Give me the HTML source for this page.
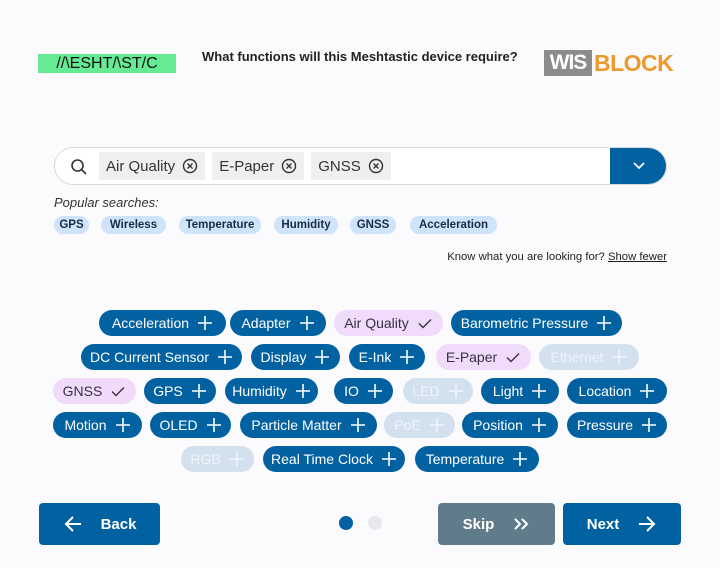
<!DOCTYPE html>
<html><head><meta charset="utf-8"><style>
*{box-sizing:border-box;margin:0;padding:0}
body{width:720px;height:568px;background:#fbfbfe;font-family:"Liberation Sans",sans-serif;position:relative;overflow:hidden}
.a{position:absolute}
.c{position:absolute;height:26px;border-radius:13px;display:flex;align-items:center;justify-content:center;gap:8px;font-size:14px;color:#fff;background:#0261a1;white-space:nowrap}
.c svg{width:16px;height:16px}
.s{background:#f0dcfa;color:#3a2f45}
.d{background:#d3e1ee;color:#eef4fa}
.p{position:absolute;top:216px;height:18px;border-radius:9px;background:#cfe3fb;color:#1a2c44;font-size:11.5px;font-weight:bold;display:flex;align-items:center;justify-content:center}
.tag{height:28px;background:#efefef;border-radius:2px;display:flex;align-items:center;padding:0 7px;gap:7px;font-size:15px;color:#333}
.btn{position:absolute;top:503px;height:42px;border-radius:4px;color:#fff;font-weight:bold;font-size:15px;display:flex;align-items:center;justify-content:center;gap:18px}
</style></head><body>
<div class="a" style="left:38px;top:54px;width:138px;height:19px;background:#67ea94;font-size:16px;color:#111;display:flex;align-items:center;justify-content:center">//\ESHT/\ST/C</div>
<div class="a" style="left:202px;top:49px;font-size:13px;font-weight:bold;color:#222">What functions will this Meshtastic device require?</div>
<div class="a" style="left:544px;top:50px;width:48px;height:26px;background:#8c8c8c;color:#fff;font-weight:bold;font-size:21px;line-height:26px;text-align:center;letter-spacing:-1px">WIS</div>
<div class="a" style="left:594px;top:50px;color:#ec9a2d;font-weight:bold;font-size:23px;line-height:26px;letter-spacing:-0.5px">BLOCK</div>

<div class="a" style="left:54px;top:147px;width:613px;height:38px;border:1px solid #d8d8d8;border-radius:19px;background:#fff;overflow:hidden">
 <svg class="a" style="left:15px;top:10px" width="18" height="18" viewBox="0 0 18 18"><circle cx="7.5" cy="7.5" r="5.5" fill="none" stroke="#333" stroke-width="1.6"/><path d="M11.5 11.5L16 16" stroke="#333" stroke-width="1.6"/></svg>
 <div class="a" style="left:44px;top:4px;display:flex;gap:7px">
  <div class="tag">Air Quality <svg width="16" height="16" viewBox="0 0 16 16"><circle cx="8" cy="8" r="6.5" fill="none" stroke="#333" stroke-width="1.4"/><path d="M5.5 5.5l5 5M10.5 5.5l-5 5" stroke="#333" stroke-width="1.4"/></svg></div>
  <div class="tag">E-Paper <svg width="16" height="16" viewBox="0 0 16 16"><circle cx="8" cy="8" r="6.5" fill="none" stroke="#333" stroke-width="1.4"/><path d="M5.5 5.5l5 5M10.5 5.5l-5 5" stroke="#333" stroke-width="1.4"/></svg></div>
  <div class="tag">GNSS <svg width="16" height="16" viewBox="0 0 16 16"><circle cx="8" cy="8" r="6.5" fill="none" stroke="#333" stroke-width="1.4"/><path d="M5.5 5.5l5 5M10.5 5.5l-5 5" stroke="#333" stroke-width="1.4"/></svg></div>
 </div>
 <div class="a" style="left:555px;top:-1px;width:58px;height:38px;background:#0261a1"><svg class="a" style="left:21px;top:12px" width="16" height="14" viewBox="0 0 16 14"><path d="M3 4l5 5 5-5" fill="none" stroke="#fff" stroke-width="1.8"/></svg></div>
</div>

<div class="a" style="left:54px;top:195px;font-size:13px;font-style:italic;color:#333">Popular searches:</div>
<div class="p" style="left:54px;width:35px">GPS</div>
<div class="p" style="left:101px;width:65px">Wireless</div>
<div class="p" style="left:179px;width:82px">Temperature</div>
<div class="p" style="left:274px;width:64px">Humidity</div>
<div class="p" style="left:350px;width:46px">GNSS</div>
<div class="p" style="left:410px;width:87px">Acceleration</div>

<div class="a" style="right:53px;top:251px;font-size:11.3px;color:#222">Know what you are looking for? <u>Show fewer</u></div>

<svg width="0" height="0" style="position:absolute"><defs>
<symbol id="pl" viewBox="0 0 16 16"><path d="M8 1v14M1 8h14" stroke="currentColor" stroke-width="1.6"/></symbol>
<symbol id="ck" viewBox="0 0 16 16"><path d="M2 8.5l4 4 8-8" fill="none" stroke="currentColor" stroke-width="1.4"/></symbol>
</defs></svg>

<div class="c" style="left:99px;top:310px;width:127px">Acceleration<svg><use href="#pl"/></svg></div>
<div class="c" style="left:230px;top:310px;width:96px">Adapter<svg><use href="#pl"/></svg></div>
<div class="c s" style="left:334px;top:310px;width:109px">Air Quality<svg><use href="#ck"/></svg></div>
<div class="c" style="left:451px;top:310px;width:171px">Barometric Pressure<svg><use href="#pl"/></svg></div>

<div class="c" style="left:81px;top:344px;width:161px">DC Current Sensor<svg><use href="#pl"/></svg></div>
<div class="c" style="left:251px;top:344px;width:89px">Display<svg><use href="#pl"/></svg></div>
<div class="c" style="left:349px;top:344px;width:76px">E-Ink<svg><use href="#pl"/></svg></div>
<div class="c s" style="left:436px;top:344px;width:95px">E-Paper<svg><use href="#ck"/></svg></div>
<div class="c d" style="left:539px;top:344px;width:100px">Ethernet<svg><use href="#pl"/></svg></div>

<div class="c s" style="left:53px;top:378px;width:83px">GNSS<svg><use href="#ck"/></svg></div>
<div class="c" style="left:144px;top:378px;width:72px">GPS<svg><use href="#pl"/></svg></div>
<div class="c" style="left:225px;top:378px;width:93px">Humidity<svg><use href="#pl"/></svg></div>
<div class="c" style="left:334px;top:378px;width:59px">IO<svg><use href="#pl"/></svg></div>
<div class="c d" style="left:403px;top:378px;width:70px">LED<svg><use href="#pl"/></svg></div>
<div class="c" style="left:481px;top:378px;width:78px">Light<svg><use href="#pl"/></svg></div>
<div class="c" style="left:567px;top:378px;width:100px">Location<svg><use href="#pl"/></svg></div>

<div class="c" style="left:53px;top:412px;width:89px">Motion<svg><use href="#pl"/></svg></div>
<div class="c" style="left:150px;top:412px;width:81px">OLED<svg><use href="#pl"/></svg></div>
<div class="c" style="left:240px;top:412px;width:137px">Particle Matter<svg><use href="#pl"/></svg></div>
<div class="c d" style="left:384px;top:412px;width:71px">PoE<svg><use href="#pl"/></svg></div>
<div class="c" style="left:462px;top:412px;width:96px">Position<svg><use href="#pl"/></svg></div>
<div class="c" style="left:567px;top:412px;width:100px">Pressure<svg><use href="#pl"/></svg></div>

<div class="c d" style="left:181px;top:446px;width:73px">RGB<svg><use href="#pl"/></svg></div>
<div class="c" style="left:263px;top:446px;width:142px">Real Time Clock<svg><use href="#pl"/></svg></div>
<div class="c" style="left:415px;top:446px;width:124px">Temperature<svg><use href="#pl"/></svg></div>

<div class="btn" style="left:39px;width:121px;background:#0261a1"><svg width="20" height="18" viewBox="0 0 20 18"><path d="M18 9H3M10 2L3 9l7 7" fill="none" stroke="#fff" stroke-width="2"/></svg>Back</div>
<div class="a" style="left:339px;top:516px;width:14px;height:14px;border-radius:7px;background:#0261a1"></div>
<div class="a" style="left:368px;top:516px;width:14px;height:14px;border-radius:7px;background:#e8e8ee"></div>
<div class="btn" style="left:438px;width:117px;background:#607c8b">Skip<svg width="18" height="14" viewBox="0 0 18 14"><path d="M3 2l5 5-5 5M10 2l5 5-5 5" fill="none" stroke="#fff" stroke-width="2"/></svg></div>
<div class="btn" style="left:563px;width:118px;background:#0261a1">Next<svg width="20" height="18" viewBox="0 0 20 18"><path d="M2 9h15M10 2l7 7-7 7" fill="none" stroke="#fff" stroke-width="2"/></svg></div>
</body></html>
